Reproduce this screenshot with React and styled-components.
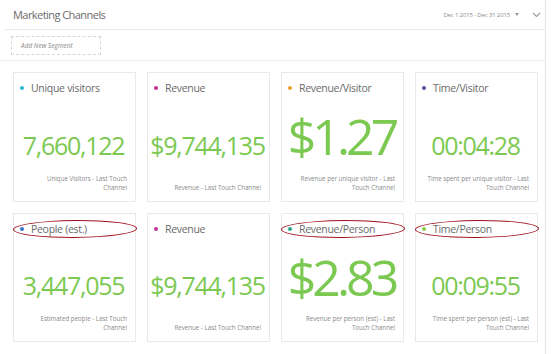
import React from 'react';
import styled, { createGlobalStyle } from 'styled-components';

const GlobalStyle = createGlobalStyle`
  body {
    margin: 0;
    background: #fff;
    font-family: "Open Sans", "Noto Sans", sans-serif;
  }
`;

const metrics = [
  { title: 'Unique visitors', dot: '#33b5d8', value: '7,660,122', sub: ['Unique Visitors - Last Touch', 'Channel'] },
  { title: 'Revenue', dot: '#c23392', value: '$9,744,135', sub: ['Revenue - Last Touch Channel'] },
  { title: 'Revenue/Visitor', dot: '#e9a230', value: '$1.27', big: true, sub: ['Revenue per unique visitor - Last', 'Touch Channel'] },
  { title: 'Time/Visitor', dot: '#4d519f', value: '00:04:28', sub: ['Time spent per unique visitor - Last', 'Touch Channel'] },
  { title: 'People (est.)', dot: '#3b74c4', value: '3,447,055', circled: true, sub: ['Estimated people - Last Touch', 'Channel'] },
  { title: 'Revenue', dot: '#c23392', value: '$9,744,135', sub: ['Revenue - Last Touch Channel'] },
  { title: 'Revenue/Person', dot: '#2aa68a', value: '$2.83', big: true, circled: true, sub: ['Revenue per person (est) - Last', 'Touch Channel'] },
  { title: 'Time/Person', dot: '#8cc84b', value: '00:09:55', circled: true, sub: ['Time spent per person (est) - Last', 'Touch Channel'] },
];

const Page = styled.div`
  width: 546px;
  height: 354px;
  box-sizing: border-box;
  border-right: 1px solid #e4e4e4;
`;

const Header = styled.header`
  height: 29px;
  margin-left: 5px;
  padding: 0 4px 0 8px;
  display: flex;
  align-items: center;
  justify-content: space-between;
  border-bottom: 1px solid #e8e8e8;
`;

const Heading = styled.h1`
  margin: 0;
  font-size: 11px;
  font-weight: 400;
  letter-spacing: -0.55px;
  color: #6b6b6b;
`;

const DateRange = styled.div`
  display: flex;
  align-items: center;
  gap: 5px;
  font-size: 6px;
  letter-spacing: -0.15px;
  color: #8c8c8c;
`;

const Caret = styled.span`
  width: 0;
  height: 0;
  border-left: 2.5px solid transparent;
  border-right: 2.5px solid transparent;
  border-top: 3px solid #999;
`;

const Chevron = styled.svg`
  margin-left: 8px;
`;

const SegmentBar = styled.div`
  height: 31px;
  padding: 6px 0 0 11px;
  box-sizing: border-box;
  border-bottom: 1px solid #ececec;
`;

const AddSegment = styled.div`
  width: 90px;
  height: 19px;
  box-sizing: border-box;
  border: 1px dashed #d6d6d6;
  padding-left: 9px;
  font-size: 6.5px;
  font-style: italic;
  line-height: 17px;
  color: #8a8a8a;
`;

const Grid = styled.div`
  display: grid;
  grid-template-columns: repeat(4, 123px);
  grid-template-rows: 130px 129px;
  column-gap: 11px;
  row-gap: 11px;
  padding: 11px 0 0 13px;
`;

const Card = styled.div`
  position: relative;
  display: flex;
  flex-direction: column;
  box-sizing: border-box;
  border: 1px solid #e9e9e9;
  padding: 9px 8px 9px 6px;
`;

const Title = styled.div`
  display: flex;
  align-items: center;
  gap: 7px;
  font-size: 10.5px;
  letter-spacing: -0.3px;
  line-height: 12px;
  color: #6a6a6a;
`;

const Dot = styled.span`
  width: 4px;
  height: 4px;
  border-radius: 50%;
  background: ${({ color }) => color};
`;

const Value = styled.div`
  flex: 1;
  display: flex;
  align-items: center;
  justify-content: center;
  padding-top: ${({ big }) => (big ? '4px' : '22px')};
  font-size: ${({ big }) => (big ? '50px' : '25px')};
  letter-spacing: ${({ big }) => (big ? '-4px' : '-1.3px')};
  color: #7cc952;
  line-height: 1;
`;

const Sub = styled.div`
  height: 18px;
  display: flex;
  flex-direction: column;
  justify-content: flex-end;
  align-items: flex-end;
  font-size: 6.2px;
  line-height: 9px;
  color: #8a8a8a;
  white-space: nowrap;
`;

const Circle = styled.div`
  position: absolute;
  left: -1px;
  top: 6px;
  width: 124px;
  height: 18px;
  box-sizing: border-box;
  border: 1.8px solid #a0131e;
  border-radius: 50%;
  transform: rotate(-0.5deg);
`;

const MetricCard = ({ title, dot, value, big, sub, circled }) => (
  <Card>
    <Title>
      <Dot color={dot} />
      {title}
    </Title>
    <Value big={big}>{value}</Value>
    <Sub>
      {sub.map((line) => (
        <span key={line}>{line}</span>
      ))}
    </Sub>
    {circled && <Circle />}
  </Card>
);

const App = () => (
  <>
    <GlobalStyle />
    <Page>
      <Header>
        <Heading>Marketing Channels</Heading>
        <DateRange>
          Dec 1 2015 - Dec 31 2015
          <Caret />
          <Chevron width="9" height="6" viewBox="0 0 9 6">
            <path d="M1 1l3.5 3.5L8 1" fill="none" stroke="#9a9a9a" strokeWidth="1.1" />
          </Chevron>
        </DateRange>
      </Header>
      <SegmentBar>
        <AddSegment>Add New Segment</AddSegment>
      </SegmentBar>
      <Grid>
        {metrics.map((m, i) => (
          <MetricCard key={i} {...m} />
        ))}
      </Grid>
    </Page>
  </>
);

export default App;
